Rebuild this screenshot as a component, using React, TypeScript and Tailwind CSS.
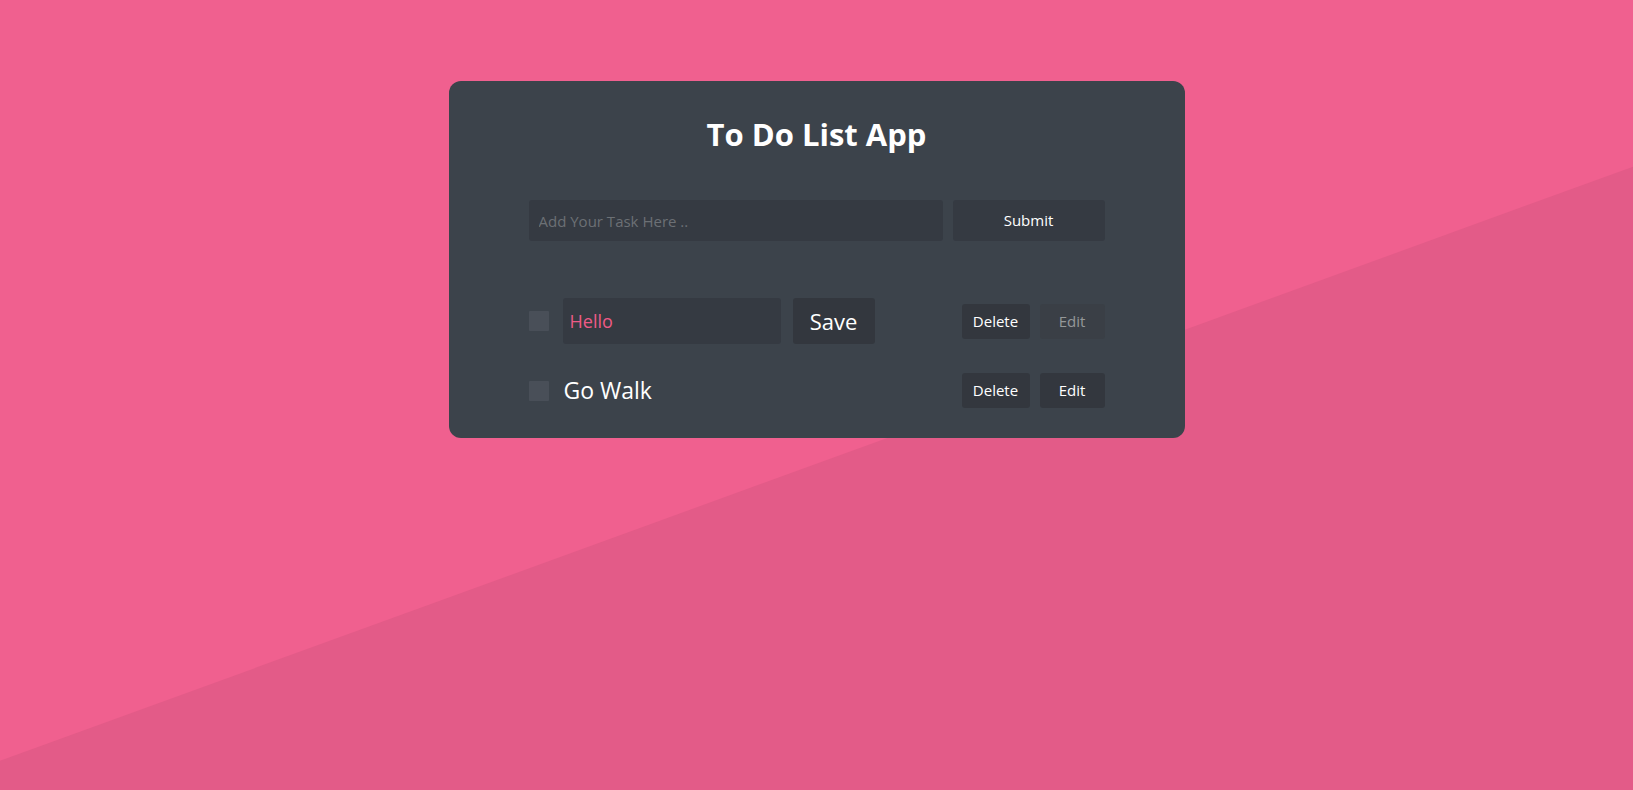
import { useState } from "react";

interface Task {
  id: number;
  text: string;
  editing: boolean;
}

const initialTasks: Task[] = [
  { id: 1, text: "Hello", editing: true },
  { id: 2, text: "Go Walk", editing: false },
];

export default function App() {
  const [tasks, setTasks] = useState(initialTasks);
  const [draft, setDraft] = useState("");

  function updateText(id: number, text: string) {
    setTasks((t) => t.map((x) => (x.id === id ? { ...x, text } : x)));
  }

  return (
    <div className="relative h-[790px] w-full overflow-hidden bg-[#f0608f] font-['Open_Sans',sans-serif]">
      {/* darker diagonal band behind the card */}
      <div className="absolute inset-0 bg-[#e35b88] [clip-path:polygon(0_96.3%,100%_21.1%,100%_100%,0_100%)]" />

      <div className="relative flex justify-center pt-[81px]">
        <div className="w-[736px] rounded-[12px] bg-[#3c434b] px-[80px] pb-[30px] pt-[33px]">
          <h1 className="text-center text-[31px] font-bold leading-[40px] text-white">
            To Do List App
          </h1>

          <form
            className="mt-[46px] flex gap-[10px]"
            onSubmit={(e) => e.preventDefault()}
          >
            <input
              className="h-[41px] w-[414px] rounded-[3px] bg-[#353a42] px-[10px] text-[15px] text-white outline-none placeholder:text-[#6c7075]"
              placeholder="Add Your Task Here .."
              value={draft}
              onChange={(e) => setDraft(e.target.value)}
            />
            <button
              type="submit"
              className="h-[41px] w-[152px] rounded-[3px] bg-[#353a42] text-[15px] text-white"
            >
              Submit
            </button>
          </form>

          <ul className="mt-[57px] flex flex-col gap-[29px]">
            {tasks.map((task) => (
              <li key={task.id} className="flex items-center">
                <span className="h-[20px] w-[20px] shrink-0 rounded-[1px] bg-[#494f58]" />
                {task.editing ? (
                  <>
                    <input
                      className="ml-[14px] h-[46px] w-[218px] rounded-[3px] bg-[#353a42] px-[7px] text-[18px] text-[#ee5a86] outline-none"
                      value={task.text}
                      onChange={(e) => updateText(task.id, e.target.value)}
                    />
                    <button className="ml-[12px] h-[46px] w-[82px] rounded-[3px] bg-[#33373e] text-[22px] text-white">
                      Save
                    </button>
                  </>
                ) : (
                  <span className="ml-[15px] text-[23px] leading-[35px] text-white">
                    {task.text}
                  </span>
                )}
                <div className="ml-auto flex gap-[10px]">
                  <button className="h-[35px] w-[68px] rounded-[3px] bg-[#33373e] text-[15px] text-white">
                    Delete
                  </button>
                  <button
                    disabled={task.editing}
                    className={
                      task.editing
                        ? "h-[35px] w-[65px] rounded-[3px] bg-[#3a3f46] text-[15px] text-[#959899]"
                        : "h-[35px] w-[65px] rounded-[3px] bg-[#33373e] text-[15px] text-white"
                    }
                  >
                    Edit
                  </button>
                </div>
              </li>
            ))}
          </ul>
        </div>
      </div>
    </div>
  );
}
